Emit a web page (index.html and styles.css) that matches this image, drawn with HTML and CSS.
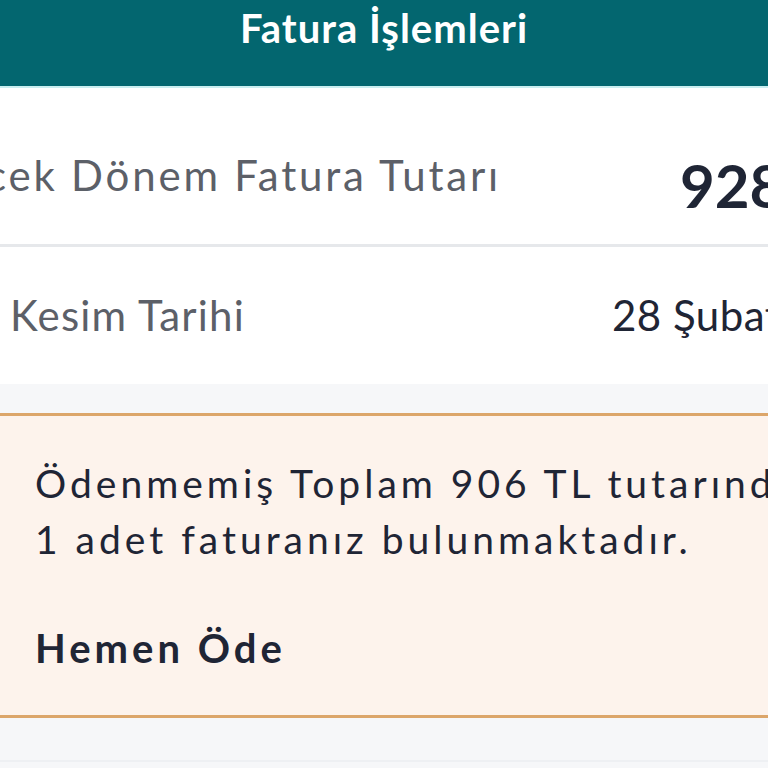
FILE: index.html
```html
<!DOCTYPE html>
<html lang="tr">
<head>
<meta charset="utf-8">
<title>Fatura İşlemleri</title>
<link rel="stylesheet" href="styles.css">
</head>
<body>
<header class="topbar">
  <h1 class="topbar-title">Fatura İşlemleri</h1>
</header>
<section class="summary">
  <div class="row row-amount">
    <span class="label label-amount">Gelecek Dönem Fatura Tutarı</span>
    <span class="amount">928,50 TL</span>
  </div>
  <div class="row row-date">
    <span class="label label-date">Fatura Kesim Tarihi</span>
    <span class="value">28 Şubat 2023</span>
  </div>
</section>
<div class="spacer"></div>
<section class="notice">
  <p class="notice-text"><span class="line">Ödenmemiş Toplam 906 TL tutarında</span><span class="line">1 adet faturanız bulunmaktadır.</span></p>
  <a class="notice-action" href="#">Hemen Öde</a>
</section>
<div class="footer-band"></div>
</body>
</html>
```

FILE: styles.css
```css
html, body {
  margin: 0;
  padding: 0;
}
body {
  width: 768px;
  height: 768px;
  overflow: hidden;
  background: #f6f7f9;
  font-family: "Lato", "Noto Sans", sans-serif;
}
.topbar {
  height: 86px;
  background: #03666f;
  border-bottom: 2px solid #c9eef0;
  display: flex;
  justify-content: center;
}
.topbar-title {
  margin: 4px 0 0;
  font-size: 40px;
  line-height: 48px;
  font-weight: 700;
  letter-spacing: 1px;
  color: #ffffff;
}
.summary {
  background: #ffffff;
}
.row {
  display: flex;
  align-items: flex-start;
  white-space: nowrap;
  overflow: hidden;
}
.row-amount {
  height: 156px;
  border-bottom: 3px solid #e6e8eb;
}
.row-date {
  height: 137px;
}
.label {
  flex: 0 0 auto;
  text-align: right;
  font-size: 42px;
  line-height: 48px;
  letter-spacing: 2.8px;
  color: #5c6068;
  overflow: hidden;
  direction: rtl;
}
.label-amount {
  width: 501px;
  margin-top: 63px;
}
.label-date {
  width: 245px;
  margin-top: 44px;
  letter-spacing: 1.2px;
}
.amount {
  flex: 0 0 auto;
  margin-left: 179px;
  margin-top: 61px;
  font-size: 60px;
  line-height: 72px;
  font-weight: 700;
  color: #1f2535;
}
.value {
  flex: 0 0 auto;
  margin-left: 367px;
  margin-top: 44px;
  font-size: 42px;
  line-height: 48px;
  letter-spacing: 0.5px;
  color: #1f2535;
}
.spacer {
  height: 29px;
  background: #f6f7f9;
}
.notice {
  background: #fdf3ec;
  border-top: 3px solid #dca66a;
  border-bottom: 3px solid #dca66a;
  padding: 39px 0 43px 35px;
  white-space: nowrap;
  overflow: hidden;
}
.notice-text {
  margin: 0 0 57px;
  font-size: 39px;
  line-height: 56px;
  letter-spacing: 4px;
  color: #1f2535;
}
.line {
  display: block;
}
.notice-action {
  display: block;
  font-size: 40px;
  line-height: 48px;
  font-weight: 700;
  letter-spacing: 4px;
  color: #1f2535;
  text-decoration: none;
}
.footer-band {
  height: 42px;
  background: #f6f7f9;
  border-bottom: 2px solid #eef0f3;
}
```
